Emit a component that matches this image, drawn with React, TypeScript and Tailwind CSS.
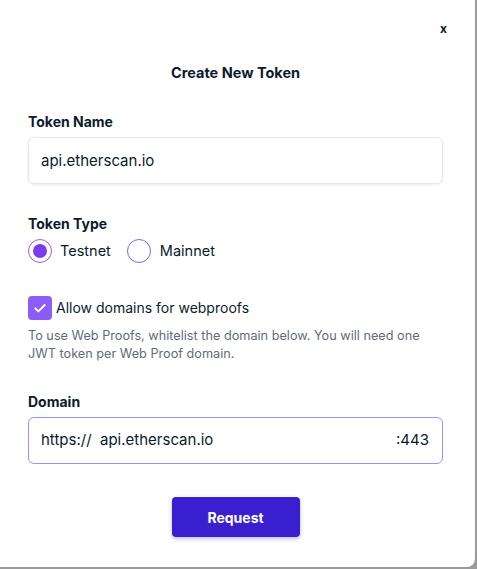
import { useState } from 'react';

export default function App() {
  const [tokenName, setTokenName] = useState('api.etherscan.io');
  const [network, setNetwork] = useState<'testnet' | 'mainnet'>('testnet');
  const [allowDomains, setAllowDomains] = useState(true);
  const [domain, setDomain] = useState('api.etherscan.io');

  return (
    <div className="h-[569px] w-[477px] overflow-hidden bg-[#9a9a9a] font-['Inter',sans-serif] text-[#0d1a2b]">
      <div className="-ml-3 -mt-3 flex h-[579px] w-[487px] flex-col rounded-lg bg-white pl-[40px] pr-[32px] pt-[35px]">
        <div className="flex justify-end">
          <button type="button" className="-mr-1 text-[12px] font-bold leading-none">
            x
          </button>
        </div>
        <h2 className="mt-[28px] text-center text-[14.5px] font-bold leading-5">Create New Token</h2>

        <label className="mt-[29px] text-[14px] font-bold leading-5">Token Name</label>
        <input
          type="text"
          value={tokenName}
          onChange={(e) => setTokenName(e.target.value)}
          className="mt-[5px] h-[47px] rounded-md border border-[#e6e7ea] px-3 text-[15px] shadow-[0_1px_3px_rgba(0,0,0,0.08)] focus:outline-none"
        />

        <label className="mt-[30px] text-[14px] font-bold leading-5">Token Type</label>
        <div className="mt-[5px] flex items-center gap-2">
          <button type="button" onClick={() => setNetwork('testnet')} className="flex items-center gap-2">
            <span className="flex h-6 w-6 items-center justify-center rounded-full border-[1.5px] border-[#8b5cf6]">
              {network === 'testnet' && <span className="h-[14px] w-[14px] rounded-full bg-[#7c3aed]" />}
            </span>
            <span className="text-[14.5px] leading-5">Testnet</span>
          </button>
          <button type="button" onClick={() => setNetwork('mainnet')} className="ml-[8px] flex items-center gap-[9px]">
            <span className="flex h-6 w-6 items-center justify-center rounded-full border-[1.5px] border-[#8b5cf6]">
              {network === 'mainnet' && <span className="h-[14px] w-[14px] rounded-full bg-[#7c3aed]" />}
            </span>
            <span className="text-[14.5px] leading-5">Mainnet</span>
          </button>
        </div>

        <button
          type="button"
          onClick={() => setAllowDomains(!allowDomains)}
          className="mt-[33px] flex items-center gap-1 text-left"
        >
          <span className="flex h-6 w-6 items-center justify-center rounded bg-[#8b5cf6]">
            {allowDomains && (
              <svg viewBox="0 0 24 24" className="h-4 w-4" fill="none" stroke="white" strokeWidth="3" strokeLinecap="round" strokeLinejoin="round">
                <path d="M5 12.5l4.5 4.5L19 7.5" />
              </svg>
            )}
          </span>
          <span className="text-[14px] leading-5">Allow domains for webproofs</span>
        </button>
        <p className="mt-[7px] text-[12.7px] leading-[18px] text-[#646b78]">
          To use Web Proofs, whitelist the domain below. You will need one JWT token per Web Proof domain.
        </p>

        <label className="mt-[29px] text-[14px] font-bold leading-5">Domain</label>
        <div className="mt-[5px] flex h-[47px] items-center rounded-md border border-[#a78bfa] pl-3 pr-[13px] text-[15px]">
          <span className="whitespace-pre">https://  </span>
          <input
            type="text"
            value={domain}
            onChange={(e) => setDomain(e.target.value)}
            className="min-w-0 flex-1 focus:outline-none"
          />
          <span>:443</span>
        </div>

        <div className="mt-[33px] flex justify-center">
          <button
            type="button"
            className="h-10 w-32 rounded bg-[#3a1fd1] text-[14px] font-bold text-white shadow-[0_2px_4px_rgba(58,31,209,0.3)]"
          >
            Request
          </button>
        </div>
      </div>
    </div>
  );
}
